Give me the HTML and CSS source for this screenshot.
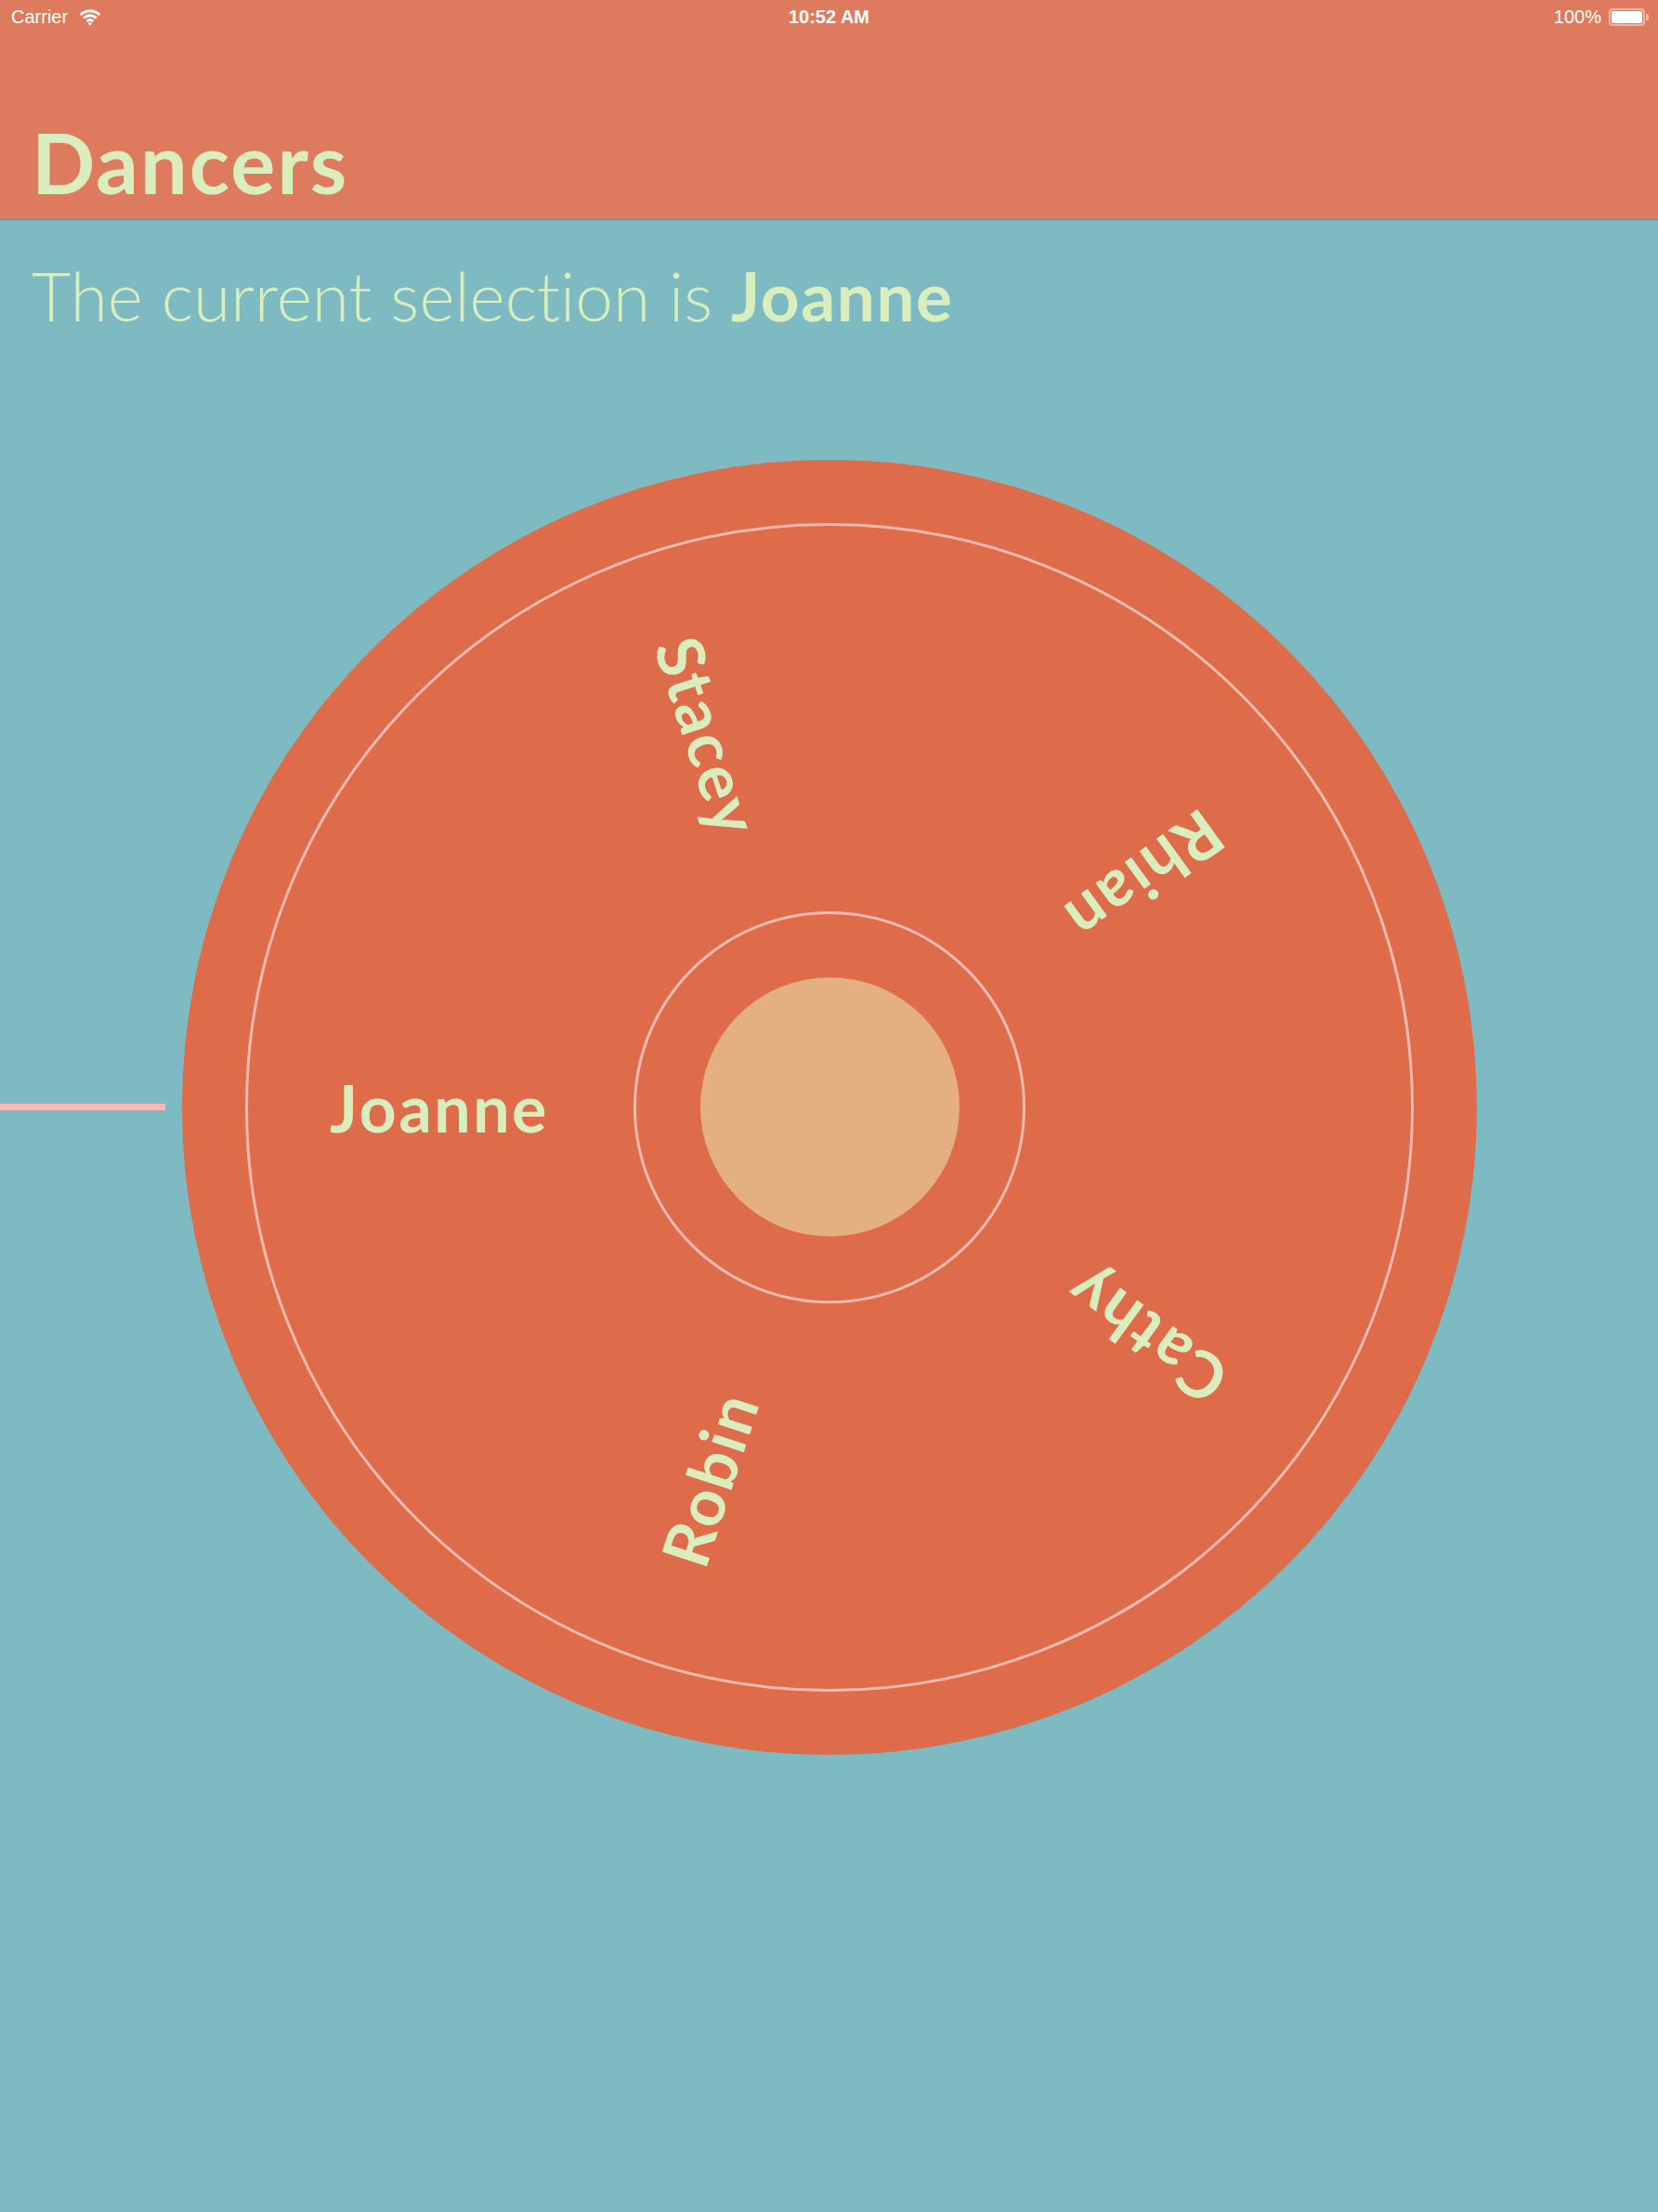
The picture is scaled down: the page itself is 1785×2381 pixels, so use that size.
FILE: index.html
```html
<!DOCTYPE html>
<html>
<head>
<meta charset="utf-8">
<link rel="stylesheet" href="styles.css">
</head>
<body>
<header class="navbar">
  <div class="statusbar">
    <div class="status-left">
      <span class="carrier">Carrier</span>
      <svg class="wifi" width="26" height="19" viewBox="0 0 26 19">
        <path d="M13 4.2c3.6 0 6.9 1.4 9.3 3.7l2-2.1C21.3 2.9 17.3 1.2 13 1.2S4.7 2.9 1.7 5.8l2 2.1C6.1 5.6 9.4 4.2 13 4.2z" fill="#fff"/>
        <path d="M13 9.2c2.2 0 4.2 0.9 5.7 2.3l2.1-2.1C18.8 7.5 16 6.2 13 6.2s-5.8 1.3-7.8 3.2l2.1 2.1C8.8 10.1 10.8 9.2 13 9.2z" fill="#fff"/>
        <path d="M13 14.1c0.9 0 1.7 0.4 2.3 0.9l2.1-2.1c-1.1-1.1-2.7-1.8-4.4-1.8s-3.3 0.7-4.4 1.8l2.1 2.1c0.6-0.5 1.4-0.9 2.3-0.9z M13 18.6l2.3-2.4c-0.6-0.5-1.4-0.9-2.3-0.9s-1.7 0.4-2.3 0.9z" fill="#fff"/>
      </svg>
    </div>
    <div class="status-time">10:52 AM</div>
    <div class="status-right">
      <span class="pct">100%</span>
      <span class="battery"><span class="battery-fill"></span></span>
      <span class="battery-nub"></span>
    </div>
  </div>
  <h1 class="title">Dancers</h1>
</header>
<main class="content">
  <p class="selection">The current selection is <strong>Joanne</strong></p>
  <div class="wheel-row">
    <div class="pointer"></div>
    <div class="wheel">
      <div class="outer-ring"></div>
      <div class="inner-ring"><div class="hub"></div></div>
      <div class="label l0">Joanne</div>
      <div class="label l1">Stacey</div>
      <div class="label l2">Rhian</div>
      <div class="label l3">Cathy</div>
      <div class="label l4">Robin</div>
    </div>
  </div>
</main>
</body>
</html>
```

FILE: styles.css
```css
html, body {
  margin: 0;
  padding: 0;
}
body {
  width: 1785px;
  min-height: 2381px;
  background: #7ebac2;
  font-family: "Lato", "Noto Sans", sans-serif;
  font-variant-ligatures: none;
  color: #daedbd;
  overflow: hidden;
}
.navbar {
  background: #de7b5f;
  height: 236px;
  border-bottom: 1px solid #5f8a8f;
  display: flex;
  flex-direction: column;
  box-sizing: content-box;
}
.statusbar {
  height: 36px;
  display: flex;
  align-items: center;
  justify-content: space-between;
  padding: 0 10px 0 12px;
  color: #fff;
  font-family: "Liberation Sans", "Noto Sans", sans-serif;
  font-size: 20px;
  position: relative;
}
.status-left {
  display: flex;
  align-items: center;
  gap: 11px;
}
.wifi {
  display: block;
}
.status-time {
  position: absolute;
  left: 0;
  right: 0;
  text-align: center;
  font-weight: bold;
  pointer-events: none;
}
.status-right {
  display: flex;
  align-items: center;
}
.pct {
  margin-right: 8px;
}
.battery {
  width: 33px;
  height: 13px;
  border: 2px solid rgba(255, 255, 255, 0.45);
  border-radius: 4px;
  padding: 1px;
  display: flex;
}
.battery-fill {
  flex: 1;
  background: #fff;
  border-radius: 2px;
}
.battery-nub {
  width: 3px;
  height: 7px;
  background: rgba(255, 255, 255, 0.45);
  border-radius: 0 2px 2px 0;
  margin-left: 1px;
}
.title {
  margin: 0;
  margin-top: auto;
  padding: 0 0 17px 34px;
  font-size: 90px;
  font-weight: 700;
  letter-spacing: 2px;
  line-height: 1;
  color: #daedbd;
}
.content {
  display: flex;
  flex-direction: column;
}
.selection {
  margin: 0;
  padding: 38px 0 0 34px;
  font-size: 73px;
  font-weight: 300;
  line-height: 1.2;
}
.selection strong {
  font-weight: 700;
  letter-spacing: 1.5px;
}
.wheel-row {
  margin-top: 132px;
  display: flex;
  align-items: center;
}
.pointer {
  width: 178px;
  height: 7px;
  background: #f4bcb5;
  margin-right: 18px;
}
.wheel {
  width: 1394px;
  height: 1394px;
  border-radius: 50%;
  background: #de6b4a;
  display: grid;
  place-items: center;
  position: relative;
}
.outer-ring,
.inner-ring {
  grid-area: 1 / 1;
  border-radius: 50%;
  border: 3px solid #f2bab1;
  box-sizing: border-box;
}
.outer-ring {
  width: 1258px;
  height: 1258px;
}
.inner-ring {
  width: 422px;
  height: 422px;
  display: flex;
  align-items: center;
  justify-content: center;
}
.hub {
  width: 279px;
  height: 279px;
  border-radius: 50%;
  background: #e5b081;
}
.label {
  position: absolute;
  left: 50%;
  top: 50%;
  width: 400px;
  height: 100px;
  margin-left: -200px;
  margin-top: -50px;
  display: flex;
  align-items: center;
  justify-content: center;
  font-size: 70px;
  font-weight: 700;
  letter-spacing: 2.5px;
  line-height: 1;
  color: #daedbd;
}
.l0 { transform: rotate(0deg) translateX(-420px); }
.l1 { transform: rotate(72deg) translateX(-420px); }
.l2 { transform: rotate(144deg) translateX(-420px); }
.l3 { transform: rotate(216deg) translateX(-420px); }
.l4 { transform: rotate(288deg) translateX(-420px); }
```
